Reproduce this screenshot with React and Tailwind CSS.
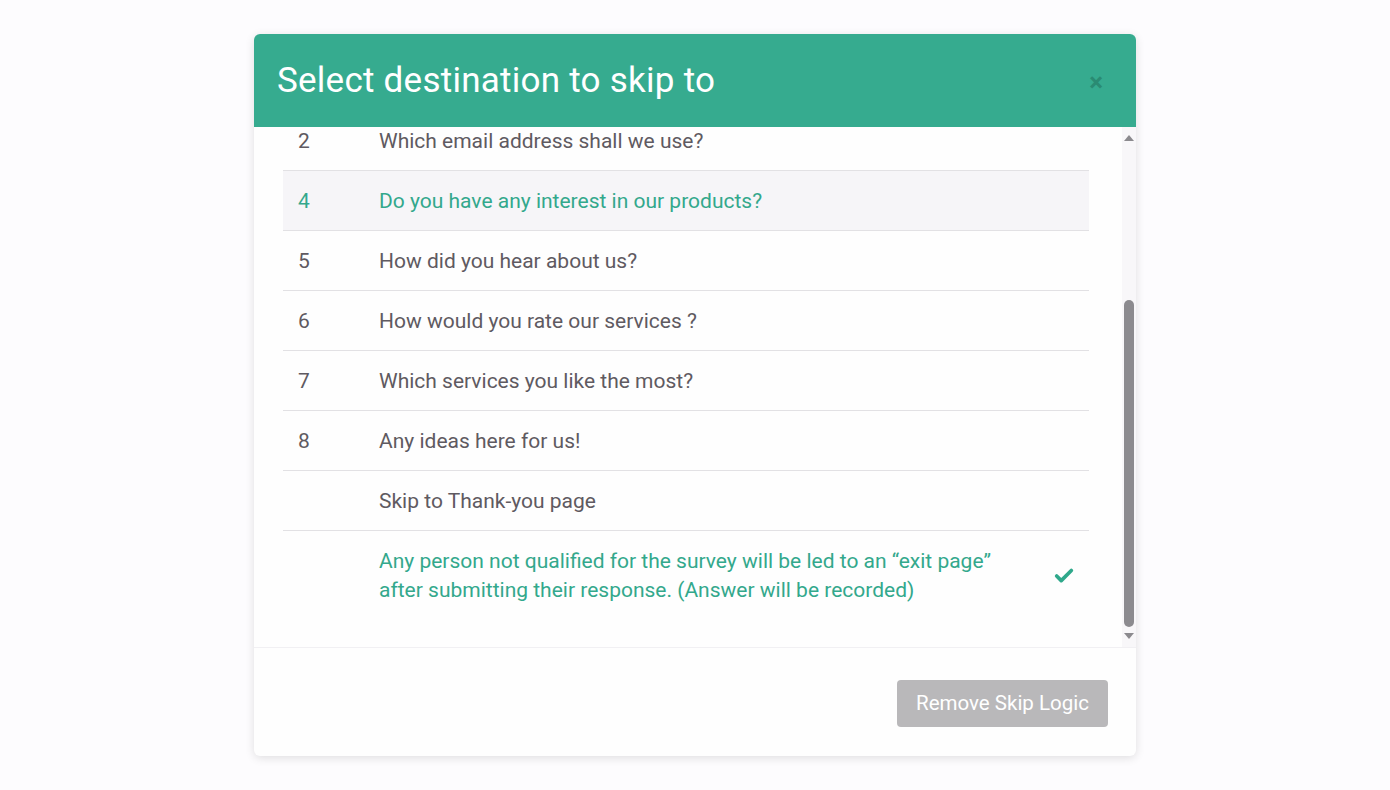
import { Check } from 'lucide-react';

const rows = [
    { num: '2', text: 'Which email address shall we use?' },
    { num: '4', text: 'Do you have any interest in our products?', active: true },
    { num: '5', text: 'How did you hear about us?' },
    { num: '6', text: 'How would you rate our services ?' },
    { num: '7', text: 'Which services you like the most?' },
    { num: '8', text: 'Any ideas here for us!' },
    { num: '', text: 'Skip to Thank-you page' },
];

const SkipModal = () => {
    return (
        <div className="min-h-screen bg-[#fdfcfe] flex justify-center pt-[34px] font-['Roboto',sans-serif]">
            <div className="w-[882px] h-[722px] rounded-md bg-[#fefefe] shadow-[0_2px_10px_rgba(0,0,0,0.12)] overflow-hidden flex flex-col">
                {/* header */}
                <div className="h-[93px] shrink-0 bg-[#36ab8f] flex items-center justify-between pl-[23px] pr-[33px] pt-[2px]">
                    <h1 className="text-[35px] text-white font-normal tracking-[0.25px]">Select destination to skip to</h1>
                    <button className="text-[#2a8b73] text-[26px] font-bold leading-none">×</button>
                </div>

                {/* list + scrollbar */}
                <div className="h-[521px] shrink-0 flex border-b border-[#f1f0f3]">
                    <div className="flex-1 overflow-hidden pl-[29px]">
                        <div className="w-[806px] mt-[-16px]">
                            {rows.map((row, i) => (
                                <div
                                    key={i}
                                    className={`h-[60px] flex items-center pt-[2px] border-b border-[#e2e1e4] text-[21px] ${row.active ? 'bg-[#f6f5f8] text-[#33a88c]' : 'text-[#5f5a61]'}`}
                                >
                                    <span className="w-[96px] pl-[15px] shrink-0">{row.num}</span>
                                    <span>{row.text}</span>
                                </div>
                            ))}
                            <div className="flex items-center pt-[16px] pb-[14px] text-[21px] text-[#33a88c]">
                                <span className="w-[96px] shrink-0"></span>
                                <p className="leading-[29px] flex-1">
                                    Any person not qualified for the survey will be led to an “exit page”<br />
                                    after submitting their response. (Answer will be recorded)
                                </p>
                                <Check className="w-[22px] h-[22px] text-[#2fa88b] mr-[14px]" strokeWidth={4} />
                            </div>
                        </div>
                    </div>
                    <div className="w-[14px] shrink-0 bg-[#f8f7f9] flex flex-col items-center pt-[8px] pb-[8px]">
                        <div className="w-0 h-0 border-l-[5px] border-r-[5px] border-b-[6px] border-l-transparent border-r-transparent border-b-[#8b8a8e]"></div>
                        <div className="flex-1 w-full flex flex-col pt-[159px] pb-[6px]">
                            <div className="w-[10px] mx-auto flex-1 rounded-full bg-[#8c8b8f]"></div>
                        </div>
                        <div className="w-0 h-0 border-l-[5px] border-r-[5px] border-t-[6px] border-l-transparent border-r-transparent border-t-[#8b8a8e]"></div>
                    </div>
                </div>

                {/* footer */}
                <div className="flex-1 flex items-center justify-end pr-[28px] pt-[2px]">
                    <button className="h-[47px] w-[211px] rounded bg-[#b9b8ba] text-white text-[20.5px]">Remove Skip Logic</button>
                </div>
            </div>
        </div>
    );
};

export default function App() {
    return <SkipModal />;
}
